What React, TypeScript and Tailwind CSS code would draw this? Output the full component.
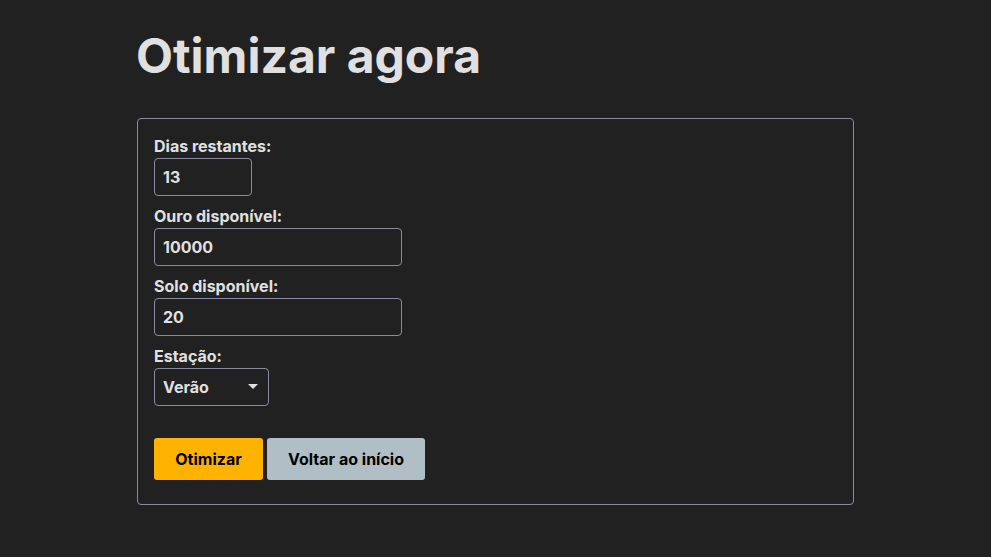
import React, { useState } from 'react';

export default function App() {
  const [dias, setDias] = useState('13');
  const [ouro, setOuro] = useState('10000');
  const [solo, setSolo] = useState('20');
  const [estacao, setEstacao] = useState('Verão');

  return (
    <div
      className="min-h-screen bg-[#212121] text-[#e0e0e0] pt-[32px]"
      style={{ fontFamily: 'Inter, "Noto Sans", sans-serif' }}
    >
      <div className="mx-auto w-[717px]">
        <h1 className="text-5xl font-bold leading-none text-[#e0e0e0] -ml-[1px]">Otimizar agora</h1>

        <form
          className="mt-[38px] border border-[#8b8ba0] rounded-[4px] px-4 pt-4 pb-[24px]"
          onSubmit={(e) => e.preventDefault()}
        >
          <label className="block text-base font-bold leading-[23px]">Dias restantes:</label>
          <input
            value={dias}
            onChange={(e) => setDias(e.target.value)}
            className="w-[98px] h-[38px] px-2 bg-transparent border border-[#8b8ba0] rounded-[4px] text-base font-bold text-[#e0e0e0] outline-none"
          />

          <label className="block mt-2 text-base font-bold leading-[24px]">Ouro disponível:</label>
          <input
            value={ouro}
            onChange={(e) => setOuro(e.target.value)}
            className="w-[248px] h-[38px] px-2 bg-transparent border border-[#8b8ba0] rounded-[4px] text-base font-bold text-[#e0e0e0] outline-none"
          />

          <label className="block mt-2 text-base font-bold leading-[24px]">Solo disponível:</label>
          <input
            value={solo}
            onChange={(e) => setSolo(e.target.value)}
            className="w-[248px] h-[38px] px-2 bg-transparent border border-[#8b8ba0] rounded-[4px] text-base font-bold text-[#e0e0e0] outline-none"
          />

          <label className="block mt-2 text-base font-bold leading-[24px]">Estação:</label>
          <div className="relative w-[115px] h-[38px]">
            <select
              value={estacao}
              onChange={(e) => setEstacao(e.target.value)}
              className="appearance-none w-full h-full pl-2 pr-6 bg-[#212121] border border-[#8b8ba0] rounded-[4px] text-base font-bold text-[#e0e0e0] outline-none"
            >
              <option>Primavera</option>
              <option>Verão</option>
              <option>Outono</option>
              <option>Inverno</option>
            </select>
            {/* seta do select */}
            <svg className="absolute right-[11px] top-[16px] pointer-events-none" width="10" height="5" viewBox="0 0 10 5">
              <path d="M0 0 L10 0 L5 5 Z" fill="#e0e0e0" />
            </svg>
          </div>

          <div className="flex gap-1 mt-8">
            <button type="submit" className="h-[42px] w-[109px] rounded-[3px] bg-[#ffb300] text-black text-base font-bold">
              Otimizar
            </button>
            <button type="button" className="h-[42px] w-[158px] rounded-[3px] bg-[#b0bec5] text-black text-base font-bold">
              Voltar ao início
            </button>
          </div>
        </form>
      </div>
    </div>
  );
}
